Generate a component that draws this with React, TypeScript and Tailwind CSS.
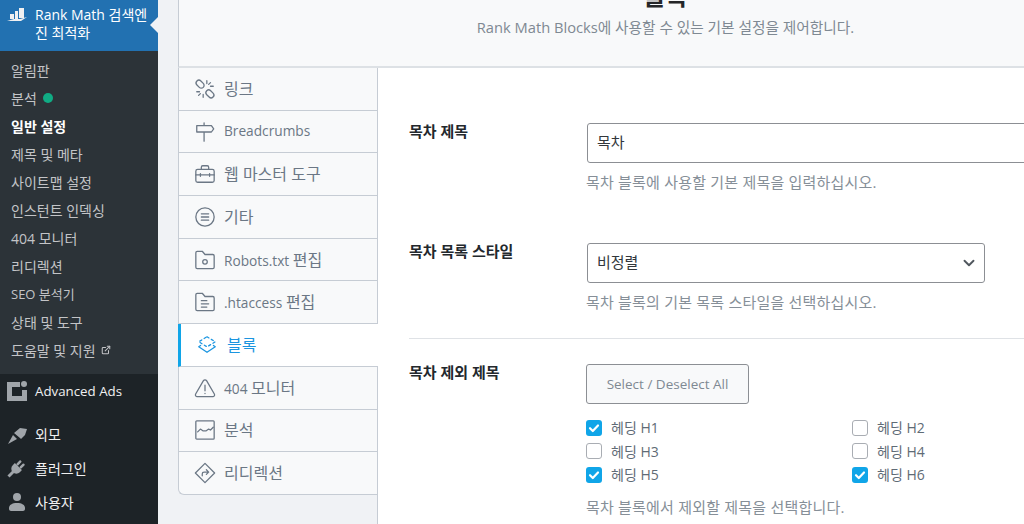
import { ChevronDown, ExternalLink } from "lucide-react";

const font = "font-['Open_Sans','Noto_Sans_CJK_KR',sans-serif]";

const subItems = [
  { label: "알림판" },
  { label: "분석", dot: true },
  { label: "일반 설정", active: true },
  { label: "제목 및 메타" },
  { label: "사이트맵 설정" },
  { label: "인스턴트 인덱싱" },
  { label: "404 모니터" },
  { label: "리디렉션" },
  { label: "SEO 분석기", small: true },
  { label: "상태 및 도구" },
  { label: "도움말 및 지원", external: true },
];

const iconClass = "w-[22px] h-[22px] shrink-0";

const LinkIcon = () => (
  <svg viewBox="0 0 24 24" className={iconClass} fill="none" stroke="currentColor" strokeWidth="1.4" strokeLinecap="round">
    <path d="M3.2 7.6a3 3 0 0 1 4.3-4.3l2.6 2.6a3 3 0 0 1-4.3 4.3z" />
    <path d="M13.9 18.2a3 3 0 0 1 4.3-4.3l2.6 2.6a3 3 0 0 1-4.3 4.3z" />
    <path d="M14 3v3M18 5l-2 2M21 9h-3M3 15h3M5 19l2-2M10 21v-3" />
  </svg>
);

const SignIcon = () => (
  <svg viewBox="0 0 24 24" className={iconClass} fill="none" stroke="currentColor" strokeWidth="1.4" strokeLinecap="round" strokeLinejoin="round">
    <path d="M11 2v3M11 12v10M3 5h16l2.500 3.500L19 12H3z" />
  </svg>
);

const BriefcaseIcon = () => (
  <svg viewBox="0 0 24 24" className={iconClass} fill="none" stroke="currentColor" strokeWidth="1.4" strokeLinecap="round" strokeLinejoin="round">
    <rect x="2" y="7" width="20" height="14" rx="2" />
    <path d="M8 7V4.500A1.500 1.500 0 0 1 9.500 3h5A1.500 1.500 0 0 1 16 4.500V7M2 13h20M7 11.500v3M17 11.500v3" />
  </svg>
);

const MenuCircleIcon = () => (
  <svg viewBox="0 0 24 24" className={iconClass} fill="none" stroke="currentColor" strokeWidth="1.4" strokeLinecap="round">
    <circle cx="12" cy="12" r="10" />
    <path d="M8 8.500h8M8 12h8M8 15.500h8" />
  </svg>
);

const FolderDotIcon = () => (
  <svg viewBox="0 0 24 24" className={iconClass} fill="none" stroke="currentColor" strokeWidth="1.4" strokeLinejoin="round">
    <path d="M2 4a1.500 1.500 0 0 1 1.500-1.500H9L12 6h8.500A1.500 1.500 0 0 1 22 7.500V20a1.500 1.500 0 0 1-1.500 1.500h-17A1.500 1.500 0 0 1 2 20z" />
    <circle cx="12" cy="14" r="2.500" />
  </svg>
);

const FolderLinesIcon = () => (
  <svg viewBox="0 0 24 24" className={iconClass} fill="none" stroke="currentColor" strokeWidth="1.4" strokeLinejoin="round" strokeLinecap="round">
    <path d="M2 4a1.500 1.500 0 0 1 1.500-1.500H9L12 6h8.500A1.500 1.500 0 0 1 22 7.500V20a1.500 1.500 0 0 1-1.500 1.500h-17A1.500 1.500 0 0 1 2 20z" />
    <path d="M8 10.500h6M8 14h8M8 17.500h6" />
  </svg>
);

const BlocksIcon = () => (
  <svg viewBox="0 0 24 24" className={iconClass} fill="none" stroke="currentColor" strokeWidth="1.4" strokeLinecap="round" strokeLinejoin="round">
    <path d="M12 3l9 5.500-9 5.500-9-5.500z" strokeDasharray="2.500 3" />
    <path d="M5 12.500l-2 1.500 9 6 9-6-2-1.500" />
  </svg>
);

const WarningIcon = () => (
  <svg viewBox="0 0 24 24" className={iconClass} fill="none" stroke="currentColor" strokeWidth="1.4" strokeLinecap="round" strokeLinejoin="round">
    <path d="M10.300 4L1.800 18.500A2 2 0 0 0 3.500 21.500h17a2 2 0 0 0 1.700-3L13.700 4a2 2 0 0 0-3.400 0z" />
    <path d="M12 9v6M12 17.800v.2" />
  </svg>
);

const ChartIcon = () => (
  <svg viewBox="0 0 24 24" className={iconClass} fill="none" stroke="currentColor" strokeWidth="1.4" strokeLinecap="round" strokeLinejoin="round">
    <rect x="2" y="2" width="20" height="20" rx="1" />
    <path d="M4 14l3-3 3 2 3 0 3-2 2 1 3-3" />
  </svg>
);

const RedirectIcon = () => (
  <svg viewBox="0 0 24 24" className={iconClass} fill="none" stroke="currentColor" strokeWidth="1.4" strokeLinecap="round" strokeLinejoin="round">
    <path d="M12 1.500L22.500 12 12 22.500 1.500 12z" />
    <path d="M9 15v-2a2 2 0 0 1 2-2h5M13.500 8.500L16 11l-2.500 2.500" />
  </svg>
);

const ko = "text-[16px]";

const navItems = [
  { id: "link", label: <span className={ko}>링크</span>, icon: <LinkIcon /> },
  { id: "crumbs", label: "Breadcrumbs", icon: <SignIcon /> },
  { id: "webmaster", label: <span className={ko}>웹 마스터 도구</span>, icon: <BriefcaseIcon /> },
  { id: "misc", label: <span className={ko}>기타</span>, icon: <MenuCircleIcon /> },
  { id: "robots", label: <>Robots.txt <span className={ko}>편집</span></>, icon: <FolderDotIcon /> },
  { id: "htaccess", label: <>.htaccess <span className={ko}>편집</span></>, icon: <FolderLinesIcon /> },
  { id: "blocks", label: <span className={ko}>블록</span>, icon: <BlocksIcon />, active: true },
  { id: "404", label: <>404 <span className={ko}>모니터</span></>, icon: <WarningIcon /> },
  { id: "analytics", label: <span className={ko}>분석</span>, icon: <ChartIcon /> },
  { id: "redirect", label: <span className={ko}>리디렉션</span>, icon: <RedirectIcon /> },
];

const headings = [
  { label: "헤딩 H1", checked: true },
  { label: "헤딩 H2", checked: false },
  { label: "헤딩 H3", checked: false },
  { label: "헤딩 H4", checked: false },
  { label: "헤딩 H5", checked: true },
  { label: "헤딩 H6", checked: true },
];

const Sidebar = () => (
  <aside className="w-[158px] shrink-0 bg-[#1d2327] text-[14px]">
    <div className="relative h-[51px] bg-[#2271b1] flex text-white leading-[18px] pt-[6px]">
      <svg viewBox="0 0 20 13" className="w-[20px] h-[13px] ml-[7px] mt-[2px] shrink-0" fill="#f0f0f1">
        <path d="M3 6h4v5H3zM8 3h3v8H8zM12 0h5v10h-5zM0 13l7-2h6l7-2-6 4z" />
      </svg>
      <span className="ml-[8px] w-[118px]">Rank Math 검색엔진 최적화</span>
      <div className="absolute right-0 top-[17px] w-0 h-0 border-y-[8px] border-y-transparent border-r-[8px] border-r-[#f0f2f5]" />
    </div>
    <ul className="h-[323px] bg-[#2c3338] pt-[5px]">
      {subItems.map((item) => (
        <li
          key={item.label}
          className={`h-[28px] flex items-center pl-[11px] ${item.active ? "text-white font-bold" : "text-[#c3c4c7]"} ${item.small ? "text-[13px] pt-[2px]" : ""}`}
        >
          {item.label}
          {item.dot && <span className="ml-[6px] w-[10px] h-[10px] rounded-full bg-[#10ac84]" />}
          {item.external && <ExternalLink className="ml-[5px] w-[10px] h-[10px]" strokeWidth={2.5} />}
        </li>
      ))}
    </ul>
    <div className="h-[34px] flex items-center text-[#f0f0f1] text-[13.300px]">
      <svg viewBox="0 0 20 20" className="w-[20px] h-[20px] ml-[7px] text-[#a0a5aa]" fill="currentColor">
        <path d="M0 1h13v5H5v9h10V9h5v11H0z" />
        <circle cx="17" cy="3" r="3" />
      </svg>
      <span className="ml-[8px] mt-[2px]">Advanced Ads</span>
    </div>
    <div className="h-[33px] mt-[10px] flex items-center text-[#f0f0f1]">
      <svg viewBox="0 0 20 20" className="w-[20px] h-[20px] ml-[7px] text-[#a0a5aa]" fill="currentColor">
        <path d="M1 19l5-9 4 4zM7 8l6-5 7 1-1 3-1 3-4 4-1-1z" />
      </svg>
      <span className="ml-[8px]">외모</span>
    </div>
    <div className="h-[34px] flex items-center text-[#f0f0f1]">
      <svg viewBox="0 0 20 20" className="w-[20px] h-[20px] ml-[7px] text-[#a0a5aa]" fill="currentColor">
        <g transform="rotate(45 10 10)">
          <path d="M5 8h10v3a5 5 0 0 1-10 0z" />
          <rect x="6.500" y="2" width="2.500" height="6" rx="1" />
          <rect x="11" y="2" width="2.500" height="6" rx="1" />
          <rect x="8.500" y="15" width="3" height="7" />
        </g>
      </svg>
      <span className="ml-[8px]">플러그인</span>
    </div>
    <div className="h-[34px] flex items-center text-[#f0f0f1]">
      <svg viewBox="0 0 20 20" className="w-[20px] h-[20px] ml-[7px] text-[#a0a5aa]" fill="currentColor">
        <circle cx="10" cy="5" r="4" />
        <path d="M2 16c0-3 3-5 8-5s8 2 8 5v1c0 1-1 2-2 2H4c-1 0-2-1-2-2z" />
      </svg>
      <span className="ml-[8px]">사용자</span>
    </div>
  </aside>
);

const Checkbox = ({ checked }: { checked: boolean }) =>
  checked ? (
    <span className="w-[16px] h-[16px] rounded-[3px] bg-[#10a5e8] flex items-center justify-center shrink-0">
      <svg viewBox="0 0 16 16" className="w-[16px] h-[16px]" fill="none" stroke="white" strokeWidth="2.200" strokeLinecap="round" strokeLinejoin="round">
        <path d="M4 8.200l2.800 2.800L12 5.500" />
      </svg>
    </span>
  ) : (
    <span className="w-[16px] h-[16px] rounded-[3px] bg-white border border-[#a9adb3] shrink-0" />
  );

const labelClass = "font-semibold text-[15px] text-[#23282d] leading-[18px] -mt-px";
const hintClass = "text-[15px] tracking-[0.2px] text-[#868f98] leading-[20px]";
const fieldClass = "ml-px h-[40px] flex items-center rounded-[3px] bg-white border border-[#8c8f94] px-[9px] pb-px text-[15px] text-[#32373c]";

const App = () => {
  return (
    <div className={`w-[1024px] h-[524px] overflow-hidden flex bg-[#f0f2f5] ${font}`}>
      <Sidebar />
      <div className="flex-1 pl-[20px] min-w-0 overflow-hidden">
        <div className="w-[974px] h-[68px] bg-[#f8f9fa] border-b-2 border-b-[#dde1e5] border-l border-l-[#c6ccd4] overflow-hidden text-center">
          <h1 className="-mt-[19px] text-[24px] leading-[30px] font-bold text-[#242628]">블록</h1>
          <p className="mt-[6px] text-[14.700px] leading-[20px] text-[#7f8993]">Rank Math Blocks에 사용할 수 있는 기본 설정을 제어합니다.</p>
        </div>
        <div className="flex w-[974px] h-[456px]">
          <nav className="w-[199px] shrink-0 self-start text-[13.700px]">
            {navItems.map((item, i) => (
              <div
                key={item.id}
                className={`h-[42.700px] flex items-center border-b border-b-[#c6ccd4] ${i === navItems.length - 1 ? "rounded-bl-[6px]" : ""} ${
                  item.active
                    ? "relative w-[200px] bg-white border-l-[3px] border-l-[#10a5e8] text-[#1b95e0] pl-[15px] gap-[9px]"
                    : "bg-[#f8f9fa] border-l border-l-[#c6ccd4] text-[#6b7785] pl-[15px] gap-[8px]"
                }`}
              >
                {item.icon}
                <span>{item.label}</span>
              </div>
            ))}
          </nav>
          <main className="flex-1 bg-white border-l border-l-[#c6ccd4] pl-[31px] pt-[55px]">
            <div className="grid grid-cols-[177px_1fr]">
              <div className={labelClass}>목차 제목</div>
              <div>
                <div className={`${fieldClass} w-[500px]`}>목차</div>
                <p className={`${hintClass} mt-[9px]`}>목차 블록에 사용할 기본 제목을 입력하십시오.</p>
              </div>
            </div>
            <div className="grid grid-cols-[177px_1fr] mt-[51px]">
              <div className={labelClass}>목차 목록 스타일</div>
              <div>
                <div className={`${fieldClass} w-[398px] justify-between pr-[6px]`}>
                  비정렬
                  <ChevronDown className="w-[18px] h-[18px] text-[#50575e]" strokeWidth={2.500} />
                </div>
                <p className={`${hintClass} mt-[9px]`}>목차 블록의 기본 목록 스타일을 선택하십시오.</p>
              </div>
            </div>
            <div className="border-t border-t-[#dfe2e6] mt-[26px] pt-[25px] grid grid-cols-[177px_1fr]">
              <div className={labelClass}>목차 제외 제목</div>
              <div>
                <button className="w-[163px] h-[40px] rounded-[3px] bg-[#f8f9fa] border border-[#8c8f94] text-[13.500px] text-[#7f8993]">
                  Select / Deselect All
                </button>
                <div className="grid grid-cols-[266px_200px] mt-[12px]">
                  {headings.map((h) => (
                    <label key={h.label} className="h-[23.500px] flex items-center gap-[9px] text-[14px] text-[#5f6b76]">
                      <Checkbox checked={h.checked} />
                      {h.label}
                    </label>
                  ))}
                </div>
                <p className={`${hintClass} mt-[10px]`}>목차 블록에서 제외할 제목을 선택합니다.</p>
              </div>
            </div>
          </main>
        </div>
      </div>
    </div>
  );
};

export default App;
